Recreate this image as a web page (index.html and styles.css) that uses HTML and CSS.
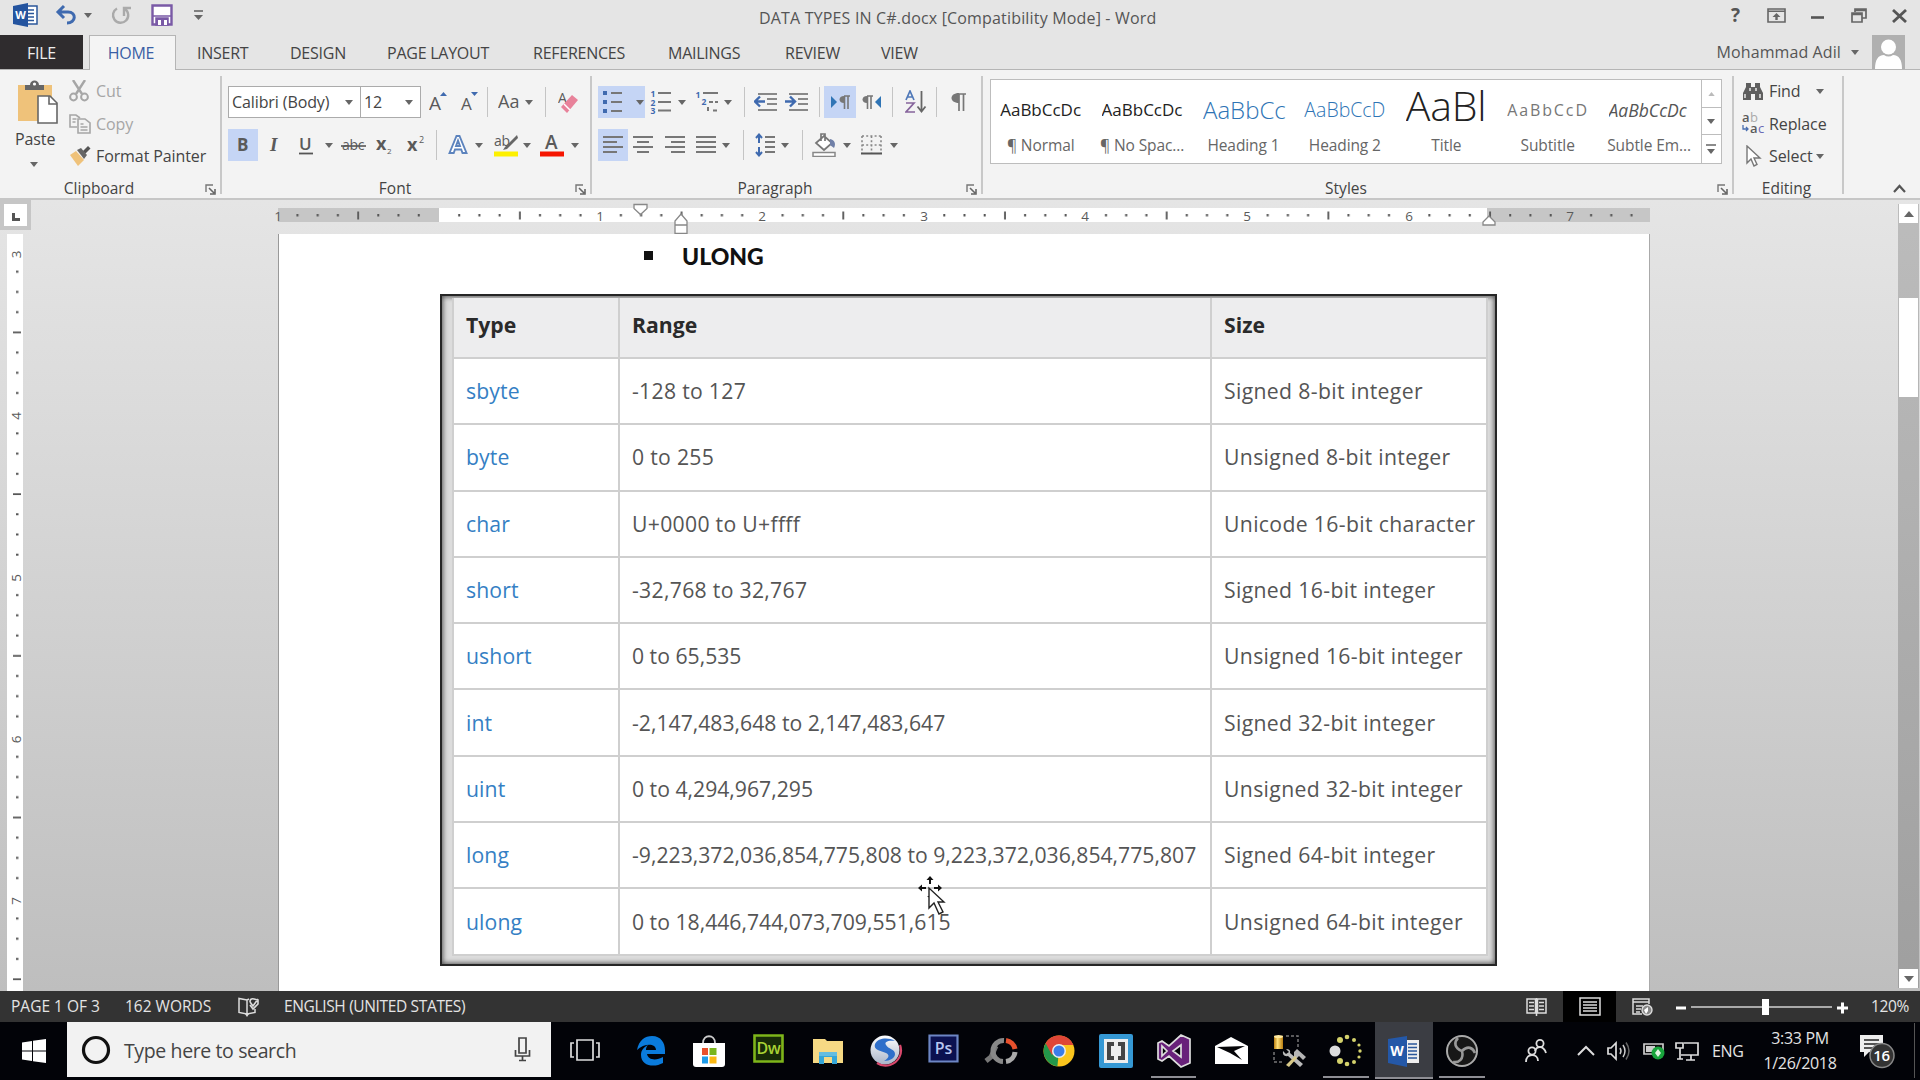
FILE: index.html
```html
<!DOCTYPE html>
<html lang="en">
<head>
<meta charset="utf-8">
<title>DATA TYPES IN C#.docx [Compatibility Mode] - Word</title>
<link rel="stylesheet" href="styles.css">
</head>
<body>
<svg class="defs" width="0" height="0">
  <defs>
    <symbol id="down" viewBox="0 0 8 5"><path d="M0 0h8L4 5z" fill="#666"/></symbol>
    <symbol id="launch" viewBox="0 0 11 11"><path d="M1 8V1h7" fill="none" stroke="#777" stroke-width="1.4"/><path d="M4 4l5 5M10 5v5H5" fill="none" stroke="#666" stroke-width="1.6"/></symbol>
    <pattern id="ticks" x="439" y="0" width="161.7" height="14" patternUnits="userSpaceOnUse">
      <path d="M19.2 6h2v2.5h-2zM39.4 6h2v2.5h-2zM59.6 6h2v2.5h-2zM80 3.5h1.8v8H80zM100 6h2v2.5h-2zM120.2 6h2v2.5h-2zM140.5 6h2v2.5h-2z" fill="#555"/>
    </pattern>
    <pattern id="vticks" x="0" y="20.5" width="16" height="161.7" patternUnits="userSpaceOnUse">
      <path d="M9 19.2v2h2.5v-2zM9 39.4v2h2.5v-2zM9 59.6v2h2.5v-2zM6 80v1.8h8V80zM9 100v2h2.5v-2zM9 120.2v2h2.5v-2zM9 140.5v2h2.5v-2z" fill="#555"/>
    </pattern>
    <linearGradient id="gold" x1="0" x2="1"><stop offset="0" stop-color="#b87d10"/><stop offset=".4" stop-color="#ffe07a"/><stop offset="1" stop-color="#b87d10"/></linearGradient>
    <linearGradient id="orb" x1="0" y1="0" x2="0" y2="1"><stop offset="0" stop-color="#fff"/><stop offset="1" stop-color="#a9b4c8"/></linearGradient>
  </defs>
</svg>

<header class="titlebar">
  <div class="quick">
    <svg width="25" height="24" viewBox="0 0 25 24"><path d="M12 3h12v18H12z" fill="#fff" stroke="#2b579a" stroke-width="1.5"/><path d="M15 7h6M15 10.5h6M15 14h6M15 17.5h6" stroke="#2b579a" stroke-width="1.4"/><path d="M0 3l15-3v24L0 21z" fill="#24549f"/><text x="7.5" y="16" class="glyph-w">W</text></svg>
    <svg width="22" height="22" viewBox="0 0 22 22"><path d="M9 2L3 8l6 6M3 8h10c9 0 8 11-1 11" fill="none" stroke="#3f6aaf" stroke-width="3"/></svg>
    <svg class="arr"><use href="#down"/></svg>
    <svg width="22" height="22" viewBox="0 0 22 22"><path d="M7 4.5a7.6 7.6 0 1 0 8 .5M14 12V4h7" fill="none" stroke="#aaa" stroke-width="2.4"/></svg>
    <svg width="22" height="22" viewBox="0 0 22 22"><path d="M1.500 1.500h19v19h-19z" fill="#fff" stroke="#7a5aa6" stroke-width="2.400"/><path d="M2 12h18M5 14h12v7H5z" fill="#7a5aa6" stroke="#7a5aa6" stroke-width="1.500"/><path d="M7 16h3v5H7zM13 16h3v5h-3z" fill="#fff"/></svg>
    <svg width="9" height="10" viewBox="0 0 9 10"><path d="M0 1h9" stroke="#666" stroke-width="1.600"/><path d="M0 5h9L4.500 10z" fill="#666"/></svg>
  </div>
  <h1 class="title">DATA TYPES IN C#.docx [Compatibility Mode] - Word</h1>
  <div class="window-buttons">
    <b class="help">?</b>
    <svg width="19" height="15" viewBox="0 0 19 15"><path d="M1 1h17v13H1zM1 3.200h17" fill="none" stroke="#666" stroke-width="1.600"/><path d="M9.500 5l4 4h-2.800v3H8.300V9H5.500z" fill="#666"/></svg>
    <svg width="13" height="15" viewBox="0 0 13 15"><path d="M0 9.500h13" stroke="#555" stroke-width="2.600"/></svg>
    <svg width="16" height="15" viewBox="0 0 16 15"><path d="M1 5h10v9H1zM1 6.500h10M4 4V1h11v9h-4M4 2.500h11" fill="none" stroke="#666" stroke-width="1.700"/></svg>
    <svg width="15" height="14" viewBox="0 0 15 14"><path d="M1 1l13 12M14 1L1 13" stroke="#555" stroke-width="2.800"/></svg>
  </div>
</header>

<nav class="tabs">
  <span class="tab file">FILE</span>
  <span class="tab home">HOME</span>
  <span class="tab t-insert">INSERT</span>
  <span class="tab t-design">DESIGN</span>
  <span class="tab t-layout">PAGE LAYOUT</span>
  <span class="tab t-ref">REFERENCES</span>
  <span class="tab t-mail">MAILINGS</span>
  <span class="tab t-review">REVIEW</span>
  <span class="tab t-view">VIEW</span>
  <div class="account"><span>Mohammad Adil</span><svg class="arr"><use href="#down"/></svg>
    <svg class="avatar" width="33" height="34" viewBox="0 0 33 34"><path d="M0 0h33v34H0z" fill="#b0b0b0"/><circle cx="16.500" cy="12" r="7.500" fill="#fff"/><path d="M3 34c0-9 3-14 9-14q4.500 3 9 0c6 0 9 5 9 14z" fill="#fff"/></svg>
  </div>
</nav>

<section class="ribbon">
  <div class="group clipboard">
    <div class="group-body">
      <div class="paste">
        <svg width="42" height="44" viewBox="0 0 42 44"><path d="M1 5h34v36H1z" fill="#efc27a"/><path d="M8 10V5h5C13-1 22-1 22 5h5v5z" fill="#666"/><circle cx="17.500" cy="4" r="1.600" fill="#fff"/><path d="M21 16h12l7 7v20H21z" fill="#fff" stroke="#666" stroke-width="1.600"/><path d="M32 16v8h8" fill="none" stroke="#666" stroke-width="1.600"/></svg>
        <span>Paste</span>
        <svg class="arr"><use href="#down"/></svg>
      </div>
      <div class="commands">
        <div class="cmd off"><svg width="20" height="22" viewBox="0 0 20 22"><path d="M4 0l9 14M16 0L7 14" stroke="#a6a6a6" stroke-width="2.400"/><circle cx="4.500" cy="17" r="3.400" fill="none" stroke="#a6a6a6" stroke-width="2"/><circle cx="15.500" cy="17" r="3.400" fill="none" stroke="#a6a6a6" stroke-width="2"/></svg><span>Cut</span></div>
        <div class="cmd off"><svg width="22" height="20" viewBox="0 0 22 20"><path d="M8 13H1V1h6l4 3M3.500 5h4M3.500 8h3" fill="none" stroke="#a6a6a6" stroke-width="1.600"/><path d="M9 5h7l5 4v10H9zM11.500 10h3M11.500 13h7M11.500 16h7" fill="#f2f2f2" stroke="#a6a6a6" stroke-width="1.600"/></svg><span>Copy</span></div>
        <div class="cmd"><svg width="22" height="20" viewBox="0 0 22 20"><path d="M1 9l6-4 8 9-6 6z" fill="#efc27a"/><path d="M8 4l4-2 6 7-3 4z" fill="#666"/><path d="M14 5l5-5 2.500 2.500-5 5z" fill="#555"/></svg><span>Format Painter</span></div>
      </div>
    </div>
    <div class="group-label">Clipboard</div>
    <svg class="launcher"><use href="#launch"/></svg>
  </div>

  <div class="group font">
    <div class="group-body stack">
      <div class="tools font-a">
        <div class="combo"><span>Calibri (Body)</span><svg class="arr"><use href="#down"/></svg></div>
        <div class="combo size"><span>12</span><svg class="arr"><use href="#down"/></svg></div>
        <svg width="20" height="24" viewBox="0 0 20 24"><text x="0" y="20" class="g g20">A</text><path d="M11 6l3.500-4L18 6z" fill="#3f6aaf"/></svg>
        <svg width="20" height="24" viewBox="0 0 20 24"><text x="1" y="20" class="g g17">A</text><path d="M11 2l3.500 4L18 2z" fill="#3f6aaf"/></svg>
        <i class="sep"></i>
        <svg width="26" height="24" viewBox="0 0 26 24"><text x="0" y="18" class="g g18">Aa</text></svg>
        <svg class="arr"><use href="#down"/></svg>
        <i class="sep"></i>
        <svg width="22" height="24" viewBox="0 0 22 24"><text x="0" y="13" class="g g15">A</text><path d="M3 17L14 5l6 5L9 23z" fill="#e8829a"/><path d="M6 14l6 6" stroke="#fff" stroke-width="1.500"/></svg>
      </div>
      <div class="tools font-b">
        <div class="hl"><svg width="16" height="24" viewBox="0 0 16 24"><text x="2" y="18" class="g g17 heavy">B</text></svg></div>
        <svg width="16" height="24" viewBox="0 0 16 24"><text x="3" y="18" class="g serif-i">I</text></svg>
        <svg width="16" height="26" viewBox="0 0 16 26"><text x="1" y="18" class="g g17 semi">U</text><path d="M1 21.500h14" stroke="#555" stroke-width="1.800"/></svg>
        <svg class="arr"><use href="#down"/></svg>
        <svg width="28" height="22" viewBox="0 0 28 22"><text x="1" y="16" class="g g14">abc</text><path d="M0 12h25" stroke="#555" stroke-width="1.600"/></svg>
        <svg width="20" height="26" viewBox="0 0 20 26"><text x="0" y="18" class="g g18 heavy">x</text><text x="11" y="22" class="g g8">2</text></svg>
        <svg width="20" height="26" viewBox="0 0 20 26"><text x="0" y="19" class="g g18 heavy">x</text><text x="12" y="11" class="g g9">2</text></svg>
        <i class="sep"></i>
        <svg width="22" height="24" viewBox="0 0 22 24"><path d="M2.500 20L9.500 3h3l7 17h-4l-1.300-3.500H8L6.700 20zM9 13h4l-2-5.500z" fill="#fff" stroke="#5c83bd" stroke-width="1.900"/></svg>
        <svg class="arr"><use href="#down"/></svg>
        <svg width="26" height="28" viewBox="0 0 26 28"><text x="1" y="15" class="g g14">ab</text><path d="M24 4L12 16l-2 3 4-1L25 7z" fill="#666"/><path d="M1 20.500h24v5H1z" fill="#fdf000"/></svg>
        <svg class="arr"><use href="#down"/></svg>
        <svg width="24" height="28" viewBox="0 0 24 28"><text x="5" y="18" class="g g20 semi">A</text><path d="M0 20.500h24v5H0z" fill="#f51500"/></svg>
        <svg class="arr"><use href="#down"/></svg>
      </div>
    </div>
    <div class="group-label">Font</div>
    <svg class="launcher"><use href="#launch"/></svg>
  </div>

  <div class="group para">
    <div class="group-body stack">
      <div class="tools para-a">
        <div class="hl split"><svg width="20" height="22" viewBox="0 0 20 22"><path d="M0 0h4v4H0zM0 9h4v4H0zM0 18h4v4H0z" fill="#3f6aaf"/><path d="M8 2h11M8 11h11M8 20h11" stroke="#777" stroke-width="2"/></svg><svg class="arr"><use href="#down"/></svg></div>
        <svg width="21" height="26" viewBox="0 0 21 26"><text x="3" y="8" class="g num">1</text><text x="3" y="16.500" class="g num">2</text><text x="3" y="25" class="g num">3</text><path d="M8 4h13M8 13h13M8 21.500h13" stroke="#777" stroke-width="2"/></svg>
        <svg class="arr"><use href="#down"/></svg>
        <svg width="24" height="26" viewBox="0 0 24 26"><text x="3" y="9" class="g num">1</text><text x="9" y="16" class="g num">2</text><path d="M8 4h15" stroke="#777" stroke-width="2"/><path d="M14 13h9M13 18v6M18 21.500h5" stroke="#777" stroke-width="2" stroke-dasharray="4 2"/></svg>
        <svg class="arr"><use href="#down"/></svg>
        <i class="sep"></i>
        <svg width="24" height="20" viewBox="0 0 24 20"><path d="M4 2h19M13 7h10M13 12h10M4 18h19" stroke="#888" stroke-width="2"/><path d="M1 9.500h10M6 4.500l-5 5 5 5" fill="none" stroke="#3f6aaf" stroke-width="2.400"/></svg>
        <svg width="24" height="20" viewBox="0 0 24 20"><path d="M4 2h19M13 7h10M13 12h10M4 18h19" stroke="#888" stroke-width="2"/><path d="M0 9.500h10M5 4.500l5 5-5 5" fill="none" stroke="#3f6aaf" stroke-width="2.400"/></svg>
        <i class="sep"></i>
        <div class="hl"><svg width="19" height="14" viewBox="0 0 19 14"><path d="M0 1l6 6-6 6z" fill="#2f74b5"/><path d="M13 1h6M13.500 1v13M17 1v13" stroke="#777" stroke-width="1.600"/><path d="M13 1v7c-6 0-6-7 0-7" fill="#777"/></svg></div>
        <svg width="19" height="14" viewBox="0 0 19 14"><path d="M19 1l-6 6 6 6z" fill="#2f74b5"/><path d="M5 1h6M5.500 1v13M9 1v13" stroke="#777" stroke-width="1.600"/><path d="M5 1v7c-6 0-6-7 0-7" fill="#777"/></svg>
        <i class="sep"></i>
        <svg width="22" height="24" viewBox="0 0 22 24"><path d="M1 10L5 1l4 9M2.500 7h5" fill="none" stroke="#4f78b8" stroke-width="1.700"/><path d="M1 13h8L1 22h9" fill="none" stroke="#86649c" stroke-width="1.700"/><path d="M16.500 1v20M12.500 16.500l4 5 4-5" fill="none" stroke="#666" stroke-width="1.800"/></svg>
        <i class="sep"></i>
        <svg width="15" height="18" viewBox="0 0 15 18"><path d="M6 1h9M8 1v17M12.500 1v17" stroke="#777" stroke-width="1.700"/><path d="M8 0v10C-2 10-2 0 8 0" fill="#777"/></svg>
      </div>
      <div class="tools para-b">
        <div class="hl"><svg width="20" height="18" viewBox="0 0 20 18"><path d="M0 1h20M0 6h14M0 11h20M0 16h14" stroke="#777" stroke-width="2"/></svg></div>
        <svg width="20" height="18" viewBox="0 0 20 18"><path d="M0 1h20M4 6h12M0 11h20M4 16h12" stroke="#777" stroke-width="2"/></svg>
        <svg width="20" height="18" viewBox="0 0 20 18"><path d="M0 1h20M6 6h14M0 11h20M6 16h14" stroke="#777" stroke-width="2"/></svg>
        <svg width="20" height="18" viewBox="0 0 20 18"><path d="M0 1h20M0 6h20M0 11h20M0 16h20" stroke="#777" stroke-width="2"/></svg>
        <svg class="arr"><use href="#down"/></svg>
        <i class="sep"></i>
        <svg width="20" height="24" viewBox="0 0 20 24"><path d="M4 2v8M1 5l3-3.500L7 5M4 14v8M1 19l3 3.500L7 19" fill="none" stroke="#3f6aaf" stroke-width="2"/><path d="M10 4h10M10 9h10M10 14h10M10 19h10" stroke="#777" stroke-width="1.800"/></svg>
        <svg class="arr"><use href="#down"/></svg>
        <i class="sep"></i>
        <svg width="24" height="24" viewBox="0 0 24 24"><path d="M4 10l8-7 8 7-8 7zM9 8V1h4v7" fill="#fff" stroke="#777" stroke-width="1.700"/><path d="M18 6c5 1 6 5 4 9l-4-3z" fill="#7080a8"/><path d="M1 19.500h22v4H1z" fill="#fff" stroke="#888" stroke-width="1.500"/></svg>
        <svg class="arr"><use href="#down"/></svg>
        <svg width="21" height="20" viewBox="0 0 21 20"><path d="M1 1h19M1 10h19M1 1v17M10.500 1v17M20 1v17" stroke="#888" stroke-width="1.600" stroke-dasharray="2 2.200"/><path d="M0 18.500h21" stroke="#555" stroke-width="2"/></svg>
        <svg class="arr"><use href="#down"/></svg>
      </div>
    </div>
    <div class="group-label">Paragraph</div>
    <svg class="launcher"><use href="#launch"/></svg>
  </div>

  <div class="group styles">
    <div class="gallery">
      <div class="style"><span class="sample">AaBbCcDc</span><span class="name">¶ Normal</span></div>
      <div class="style"><span class="sample">AaBbCcDc</span><span class="name">¶ No Spac...</span></div>
      <div class="style"><span class="sample h1s">AaBbCc</span><span class="name">Heading 1</span></div>
      <div class="style"><span class="sample h2s">AaBbCcD</span><span class="name">Heading 2</span></div>
      <div class="style"><span class="sample ttl">AaBl</span><span class="name">Title</span></div>
      <div class="style"><span class="sample sub">AaBbCcD</span><span class="name">Subtitle</span></div>
      <div class="style"><span class="sample em">AaBbCcDc</span><span class="name">Subtle Em...</span></div>
      <div class="gallery-scroll">
        <span><svg width="7" height="4" viewBox="0 0 8 5"><path d="M0 5h8L4 0z" fill="#bbb"/></svg></span>
        <span><svg class="arr"><use href="#down"/></svg></span>
        <span><svg width="10" height="10" viewBox="0 0 10 10"><path d="M0 1h10" stroke="#666" stroke-width="1.500"/><path d="M1 5h8L5 10z" fill="#666"/></svg></span>
      </div>
    </div>
    <div class="group-label">Styles</div>
    <svg class="launcher"><use href="#launch"/></svg>
  </div>

  <div class="group editing">
    <div class="group-body commands">
      <div class="cmd"><svg width="22" height="19" viewBox="0 0 22 19"><path d="M1 18v-7L4 5V1h5v4h4V1h5v4l3 6v7h-8v-6h-4v6z" fill="#5e5e5e"/><path d="M3 12v4M18 12v4M8 6v3M14 6v3" stroke="#fff" stroke-width="1.300"/></svg><span>Find</span><svg class="arr far"><use href="#down"/></svg></div>
      <div class="cmd"><svg width="25" height="24" viewBox="0 0 25 24"><text x="0" y="10" class="g g13 semi">a</text><text x="8" y="10" class="g g13 pale">b</text><text x="8" y="21" class="g g13 semi">a</text><text x="16" y="21" class="g g13 violet">c</text><path d="M1 13v4h5M4 15l2 2-2 2" fill="none" stroke="#4a6fb0" stroke-width="1.300"/></svg><span>Replace</span></div>
      <div class="cmd"><svg width="22" height="22" viewBox="0 0 22 22"><path d="M5 1v17l4-4 3 7 3-1.500-3-6.500h6z" fill="#fff" stroke="#777" stroke-width="1.400"/></svg><span>Select</span><svg class="arr near"><use href="#down"/></svg></div>
    </div>
    <div class="group-label">Editing</div>
  </div>
  <svg class="collapse" width="13" height="9" viewBox="0 0 13 9"><path d="M1 8l5.500-6L12 8" fill="none" stroke="#555" stroke-width="2.200"/></svg>
</section>

<main class="workspace">
  <div class="left-rail">
    <div class="tab-stop"><span></span></div>
    <svg class="vruler" width="16" height="757" viewBox="0 0 16 757">
      <path d="M0 0h16v757H0z" fill="#fff"/><path d="M0 21h16v740H0z" fill="url(#vticks)" transform="translate(0 -3)"/>
      <g class="g rule"><text transform="translate(14 20.500) rotate(-90)">3</text><text transform="translate(14 182) rotate(-90)">4</text><text transform="translate(14 344) rotate(-90)">5</text><text transform="translate(14 505.500) rotate(-90)">6</text><text transform="translate(14 667) rotate(-90)">7</text></g>
    </svg>
  </div>
  <div class="canvas">
    <svg class="hruler" width="1860" height="34" viewBox="31 200 1860 34">
      <path d="M278 208h161v14H278zM1487 208h163v14h-163z" fill="#c6c6c6"/><path d="M439 208h1048v14H439z" fill="#fff"/>
      <g transform="translate(0 208)"><path d="M282 0h1364v14H282z" fill="url(#ticks)"/></g>
      <g class="g rule"><text x="278" y="221">1</text><text x="600" y="221">1</text><text x="762" y="221">2</text><text x="924" y="221">3</text><text x="1085" y="221">4</text><text x="1247" y="221">5</text><text x="1409" y="221">6</text><text x="1570" y="221">7</text></g>
      <path d="M634 204.500h13v4l-6.500 6-6.500-6zM681 214l6 7v12.500h-12V221zM675 225h12M1489 216l6 6v3h-12v-3z" fill="#fff" stroke="#888" stroke-width="1.300"/>
    </svg>
    <article class="page">
      <p class="bullet"><i></i><b>ULONG</b></p>
      <div class="frame">
        <table>
          <thead><tr><th class="c1">Type</th><th class="c2">Range</th><th class="c3">Size</th></tr></thead>
          <tbody>
            <tr><td><a>sbyte</a></td><td class="wide">-128 to 127</td><td>Signed 8-bit integer</td></tr>
            <tr><td><a>byte</a></td><td class="wide">0 to 255</td><td>Unsigned 8-bit integer</td></tr>
            <tr><td><a>char</a></td><td class="wide">U+0000 to U+ffff</td><td>Unicode 16-bit character</td></tr>
            <tr><td><a>short</a></td><td class="wide">-32,768 to 32,767</td><td>Signed 16-bit integer</td></tr>
            <tr><td><a>ushort</a></td><td>0 to 65,535</td><td>Unsigned 16-bit integer</td></tr>
            <tr><td><a>int</a></td><td>-2,147,483,648 to 2,147,483,647</td><td>Signed 32-bit integer</td></tr>
            <tr><td><a>uint</a></td><td>0 to 4,294,967,295</td><td>Unsigned 32-bit integer</td></tr>
            <tr><td><a>long</a></td><td>-9,223,372,036,854,775,808 to 9,223,372,036,854,775,807</td><td>Signed 64-bit integer</td></tr>
            <tr><td><a>ulong</a></td><td>0 to 18,446,744,073,709,551,615</td><td>Unsigned 64-bit integer</td></tr>
          </tbody>
        </table>
      </div>
    </article>
  </div>
  <div class="scrollbar">
    <span class="sb-btn"><svg width="10" height="6" viewBox="0 0 10 6"><path d="M0 6h10L5 0z" fill="#666"/></svg></span>
    <span class="sb-thumb"></span>
    <span class="sb-btn"><svg width="10" height="6" viewBox="0 0 10 6"><path d="M0 0h10L5 6z" fill="#666"/></svg></span>
  </div>
</main>

<svg class="pointer" width="28" height="42" viewBox="0 0 28 42"><path d="M12 1l3.500 4H13v4h-2V5H8.500zM0 13l4-3.500V12h4v2H4v2.500zM24 13l-4-3.500V12h-4v2h4v2.500zM9 21h4v3z" fill="#111"/><path d="M11 13v20l5-5 5 11 4-2-5-10h6z" fill="#fff" stroke="#222" stroke-width="1.400"/></svg>

<footer class="status">
  <span class="s-page">PAGE 1 OF 3</span>
  <span class="s-words">162 WORDS</span>
  <svg class="s-proof" width="21" height="20" viewBox="0 0 21 20"><path d="M9 3L1 1.500v14L9 17l8-1.500V12M9 3v14M9 3l2-1" fill="none" stroke="#ddd" stroke-width="1.500"/><path d="M12 5l3 4 5-7M12 5q0-4 4-3l4 1v4l-5 5-3-4" fill="none" stroke="#ddd" stroke-width="1.600"/><path d="M7 17h4l-2 3z" fill="#ddd"/></svg>
  <span class="s-lang">ENGLISH (UNITED STATES)</span>
  <div class="views">
    <span class="view read"><svg width="21" height="18" viewBox="0 0 21 18"><path d="M1 1h8.500v14H1zM11.500 1H20v14h-8.500zM10.500 0v18M3 4.500h5M3 8h5M3 11.500h5M13 4.500h5M13 8h5M13 11.500h5" fill="none" stroke="#ddd" stroke-width="1.500"/></svg></span>
    <span class="view print"><svg width="22" height="19" viewBox="0 0 22 19"><path d="M1 1h20v17H1zM4 5h14M4 8h14M4 11h14M4 14h14" fill="none" stroke="#ddd" stroke-width="1.500"/></svg></span>
    <span class="view web"><svg width="21" height="18" viewBox="0 0 21 18"><path d="M17 6V1H1v15h9M1 4h16M4 8h7M4 11h5M4 14h4" fill="none" stroke="#ddd" stroke-width="1.500"/><circle cx="15" cy="12" r="5" fill="#888" stroke="#ddd" stroke-width="1.400"/><path d="M12 12l4-3v4l-2 3z" fill="#fff"/></svg></span>
  </div>
  <svg class="zoom" width="172" height="20" viewBox="0 0 172 20"><path d="M0 11h10M161 11h11M166.500 5.500v11" stroke="#fff" stroke-width="3"/><path d="M15 10h141" stroke="#aaa" stroke-width="2"/><path d="M86 2h7v16h-7z" fill="#fff"/></svg>
  <span class="s-pct">120%</span>
</footer>

<div class="taskbar">
  <div class="start"><svg width="24" height="24" viewBox="0 0 24 24"><path d="M0 3.500L10 2v9.500H0zM11 1.800L24 0v11.500H11zM0 12.500h10V22L0 20.500zM11 12.500h13V24l-13-1.800z" fill="#fff"/></svg></div>
  <div class="search">
    <svg width="30" height="30" viewBox="0 0 30 30"><circle cx="15" cy="15" r="12.500" fill="none" stroke="#111" stroke-width="3.200"/></svg>
    <span>Type here to search</span>
    <svg width="17" height="25" viewBox="0 0 17 25"><path d="M5 1h7v15H5zM1.500 13v6h14v-6M8.500 19v5M5 23.500h7" fill="none" stroke="#444" stroke-width="1.700"/></svg>
  </div>
  <div class="task-view"><svg width="30" height="24" viewBox="0 0 30 24"><path d="M7 2h16v20H7zM4 5H1v14h3M26 5h3v14h-3" fill="none" stroke="#ddd" stroke-width="1.700"/></svg></div>
  <div class="apps">
    <span class="app"><svg width="32" height="32" viewBox="0 0 32 32"><path d="M2 15C4 5 10 1 17 1c9 0 13 7 13 14v4H12c1 6 9 7 16 3v6c-9 5-22 3-22-8 0-5 3-8 7-10-2 2-2 4-2 5h10c0-7-12-7-19 0z" fill="#0a7bdc"/></svg></span>
    <span class="app"><svg width="34" height="34" viewBox="0 0 34 34"><path d="M11 9c0-9 12-9 12 0" fill="none" stroke="#ccc" stroke-width="1.800"/><path d="M1 9h32v21q0 3-3 3H4q-3 0-3-3z" fill="#fff"/><path d="M10 14h6v7h-6z" fill="#e8502c"/><path d="M17.500 14h7v7h-7z" fill="#7ab51d"/><path d="M10 22.500h6v7h-6z" fill="#1e9be9"/><path d="M17.500 22.500h7v7h-7z" fill="#fbb813"/></svg></span>
    <span class="app raised"><svg width="31" height="29" viewBox="0 0 31 29"><path d="M1.500 1.500h28v26h-28z" fill="#172b08" stroke="#7eb51a" stroke-width="2.600"/><text x="15.500" y="20" class="dw">Dw</text></svg></span>
    <span class="app"><svg width="32" height="28" viewBox="0 0 32 28"><path d="M1 2h12l2 2h16v22H1z" fill="#f6d984"/><path d="M7 27V15h18v12h-5v-7h-8v7z" fill="#35a6d8"/><path d="M7 15h18v4H7z" fill="#65bde0"/></svg></span>
    <span class="app"><svg width="34" height="34" viewBox="0 0 34 34"><circle cx="16" cy="16" r="14.500" fill="url(#orb)"/><path d="M6 10C9 4 19 3 26 7c-7-1-11 1-9 4 2 4 9 4 9 9 0 4-5 7-11 7 5-3 6-6 2-8C12 17 4 16 6 10z" fill="#2f6fca"/><path d="M31 11c3 8-1 17-10 20-5 1.500-10 0-13-2" fill="none" stroke="#d9486c" stroke-width="2.200"/></svg></span>
    <span class="app raised"><svg width="31" height="29" viewBox="0 0 31 29"><path d="M1.500 1.500h28v26h-28z" fill="#0b1150" stroke="#6d86c4" stroke-width="2.200"/><text x="15.500" y="20" class="ps">Ps</text></svg></span>
    <span class="app"><svg width="34" height="28" viewBox="0 0 34 28"><path d="M2 24l5-4 5-11" fill="none" stroke="#777" stroke-width="5"/><path d="M20 3.500A10 10 0 0 0 19 24.500" fill="none" stroke="#888" stroke-width="5"/><path d="M22 3.500A10.500 10.500 0 0 1 31 12" fill="none" stroke="#e8502c" stroke-width="5"/><path d="M31 15a10.500 10.500 0 0 1-9 9.500" fill="none" stroke="#aaa" stroke-width="5"/></svg></span>
    <span class="app"><svg width="32" height="32" viewBox="0 0 32 32"><circle cx="16" cy="16" r="15.500" fill="#fbc51d"/><path d="M16 16L2.600 8.300a15.500 15.500 0 0 0 11.800 23z" fill="#23974a"/><path d="M2.600 8.300a15.500 15.500 0 0 1 27.800 1.700H16L9 20z" fill="#df4637"/><circle cx="16" cy="16" r="7" fill="#eee"/><circle cx="16" cy="16" r="5.500" fill="#3b7de9"/></svg></span>
    <span class="app"><svg width="34" height="34" viewBox="0 0 34 34"><rect width="34" height="34" rx="2" fill="#3598d4"/><path d="M5 5h24v24H5z" fill="#eee"/><path d="M15 8v4h-3v10h3v4H8V8zM19 8v4h3v10h-3v4h7V8z" fill="#454545"/></svg></span>
    <span class="app open"><svg width="34" height="34" viewBox="0 0 34 34"><path d="M24 1l9 4v24l-9 4-12-11-7 5-4-2V9l4-2 7 5zM5 12v10l5-5zM24 11l-8 6 8 6z" fill="#68217a" fill-rule="evenodd" stroke="#ddd" stroke-width="1.700"/></svg></span>
    <span class="app"><svg width="35" height="27" viewBox="0 0 35 27"><path d="M1 9L17 0l17 9v18H1z" fill="#fff"/><path d="M3 10l28-1-11 5 8 9-12-7z" fill="#050508"/></svg></span>
    <span class="app"><svg width="34" height="34" viewBox="0 0 34 34"><path d="M14 2h12v12M2 18v10h10" fill="none" stroke="#777" stroke-width="1.500" stroke-dasharray="3 2"/><path d="M2 2h9v13H2z" fill="url(#gold)"/><ellipse cx="6.500" cy="2.500" rx="4.500" ry="1.500" fill="#ffe9a0"/><path d="M11 17q-1 6 5 5l12 11 3-3-13-11q1-4-4-4l3 3-3 2z" fill="#bbb"/><path d="M22 18l3-3 9 8-3 3-4-4-3 3-2-2z" fill="#b5b5b5"/><path d="M23 22l2 2-8 9-3-2z" fill="#d8c988"/></svg></span>
    <span class="app open"><svg width="34" height="34" viewBox="0 0 34 34"><g fill="#d4d26c"><circle cx="11" cy="6" r="3"/><circle cx="18" cy="3" r="2.300"/><circle cx="25" cy="6" r="2"/><circle cx="30" cy="11" r="1.600"/><circle cx="31" cy="17" r="1.700"/><circle cx="30" cy="23" r="1.600"/><circle cx="25" cy="28" r="2"/><circle cx="18" cy="30" r="2.300"/><circle cx="11" cy="27" r="3"/></g><circle cx="6" cy="17" r="5.500" fill="#ddd"/></svg></span>
    <span class="app active"><svg width="32" height="32" viewBox="0 0 32 32"><path d="M16 5h15v23H16z" fill="#eee"/><path d="M20 9h9M20 12.500h9M20 16h9M20 19.500h9M20 23h9" stroke="#2b579a" stroke-width="1.600"/><path d="M0 4l19-3v31L0 28z" fill="#2458a8"/><text x="9" y="21" class="word-w">W</text></svg></span>
    <span class="app open"><svg width="34" height="34" viewBox="0 0 34 34"><circle cx="17" cy="17" r="15" fill="#171717" stroke="#aaa" stroke-width="2"/><path d="M17 17C9 14 9 8 13 4M17 17c6-6 11-3 13 2M17 17c2 8-3 12-9 11" fill="none" stroke="#999" stroke-width="2.600"/></svg></span>
  </div>
  <div class="tray">
    <svg class="people" width="22" height="24" viewBox="0 0 22 24"><g fill="none" stroke="#ddd" stroke-width="1.800"><circle cx="7" cy="12" r="3.600"/><path d="M1 23c0-5 3-7 6-7s6 2 6 6"/><circle cx="15" cy="4.500" r="3.600"/><path d="M10 12c1-3 3-4 5-4s5 2 6 6"/></g></svg>
    <svg class="caret" width="18" height="11" viewBox="0 0 18 11"><path d="M1 10l8-8 8 8" fill="none" stroke="#ddd" stroke-width="2"/></svg>
    <svg class="sound" width="24" height="20" viewBox="0 0 24 20"><path d="M1 7h3l5-5v16l-5-5H1z" fill="none" stroke="#ddd" stroke-width="1.700"/><path d="M13 7q2 3 0 6M16 4q4 6 0 12" fill="none" stroke="#ccc" stroke-width="1.500"/><path d="M19 1.500q6 8.500 0 17" fill="none" stroke="#666" stroke-width="1.500"/></svg>
    <svg class="battery" width="22" height="20" viewBox="0 0 22 20"><path d="M1 3h19v10H1z" fill="#111" stroke="#ccc" stroke-width="1.700"/><path d="M3 5h9v6H3z" fill="#ccc"/><circle cx="15" cy="12" r="6.500" fill="#18a53c"/><path d="M15 8l3 4-3 4-3-4z" fill="#dff5e0"/></svg>
    <svg class="net" width="24" height="22" viewBox="0 0 24 22"><path d="M9 3h14v12H9M5 8v11M1 3h7v5H1zM16 15v5M11 20h9M2 19h6M9 15H6" fill="none" stroke="#ddd" stroke-width="1.700"/></svg>
    <span class="lang">ENG</span>
    <div class="clock"><span>3:33 PM</span><span class="date">1/26/2018</span></div>
    <svg class="notes" width="36" height="36" viewBox="0 0 36 36"><path d="M1 2h23v17H10l-5 5v-5H1z" fill="#eee"/><path d="M5 7h15M5 11h15M5 15h10" stroke="#222" stroke-width="1.500"/><circle cx="23" cy="22.500" r="12" fill="#333" stroke="#888" stroke-width="1.500"/><text x="22.500" y="28" class="badge">16</text></svg>
    <i class="edge"></i>
  </div>
</div>
</body>
</html>
```
FILE: styles.css
```css
* { box-sizing: border-box; }
body { margin: 0; width: 1920px; height: 1080px; overflow: hidden; display: flex; flex-direction: column; background: #e5e5e5; font-family: "Open Sans", "Noto Sans", sans-serif; font-size: 16px; line-height: 1; color: #444; }
svg { display: block; flex: none; }
.defs { position: absolute; }
.arr { width: 8px; height: 5px; }

/* Title bar */
.titlebar { height: 35px; flex: none; display: grid; grid-template-columns: 759px 1fr 230px; align-items: center; }
.quick { display: grid; grid-template-columns: 42px 29px 26px 41px 43px 20px; padding-left: 13px; align-items: center; margin-top: -5px; }
.title { margin: 0; font-size: 16px; font-weight: 400; letter-spacing: 0.17px; color: #555; white-space: nowrap; line-height: 24px; }
.window-buttons { display: grid; grid-template-columns: 36px 44px 40px 41px 16px; padding-left: 41px; align-items: center; margin-top: -4px; }
.help { font-size: 19px; color: #555; }

/* Tabs */
.tabs { height: 35px; flex: none; display: flex; border-bottom: 1px solid #b5b5b5; letter-spacing: -0.25px; }
.tab { height: 34px; line-height: 36px; white-space: nowrap; }
.file { width: 83px; background: #2f2c2e; color: #eee; text-align: center; margin-right: 6px; }
.home { width: 87px; height: 35px; background: #f4f4f4; border: 1px solid #b5b5b5; border-bottom: 0; color: #3a5fa5; text-align: center; line-height: 35px; margin-right: 21px; padding-right: 3px; }
.t-insert { width: 93px; }
.t-design { width: 97px; }
.t-layout { width: 146px; }
.t-ref { width: 135px; }
.t-mail { width: 117px; }
.t-review { width: 96px; }
.account { margin-left: auto; margin-right: 15px; display: flex; align-items: center; letter-spacing: 0.1px; color: #555; }
.account .arr { margin: 0 13px 0 10px; }
.avatar { align-self: flex-end; }

/* Ribbon */
.ribbon { height: 130px; flex: none; background: #f3f3f3; border-bottom: 2px solid #c6c6c6; display: flex; padding-top: 6px; }
.group { height: 118px; border-right: 2px solid #c8c8c8; display: grid; grid-template-rows: 100px 18px; position: relative; }
.clipboard { width: 222px; }
.font { width: 370px; }
.para { width: 391px; }
.styles { width: 751px; }
.editing { width: 110px; }
.group-label { text-align: center; line-height: 24px; letter-spacing: 0; font-size: 15.500px; color: #444; }
.clipboard .group-label { padding-right: 22px; }
.font .group-label { padding-right: 22px; }
.para .group-label { padding-right: 23px; }
.styles .group-label { padding-right: 23px; }
.editing .group-label { padding-right: 3px; }
.launcher { position: absolute; right: 4px; bottom: -1px; width: 11px; height: 11px; }
.group-body { display: flex; }
.stack { flex-direction: column; padding-top: 10px; gap: 11px; }
.paste { width: 69px; padding: 4px 0 0 15px; display: flex; flex-direction: column; }
.paste svg:first-child { margin-left: 2px; }
.paste span { margin: 7px 0 15px; letter-spacing: -0.1px; }
.paste .arr { margin-left: 15px; }
.commands { display: flex; flex-direction: column; }
.cmd { height: 32.500px; display: grid; grid-template-columns: 27px auto auto; justify-content: start; align-items: center; color: #444; letter-spacing: -0.1px; margin-top: -1px; margin-bottom: 1px; }
.clipboard .cmd { line-height: 30px; }
.off { color: #a6a6a6; }
.tools { height: 32px; display: grid; align-items: center; justify-items: start; }
.font-a { padding-left: 6px; grid-template-columns: 133px 68px 31px 27px 11px 27px 20px 13px 24px; }
.font-b { padding-left: 6px; grid-template-columns: 39px 31px 27px 16px 35px 31px 29px 11px 28px 18px 30px 17px 31px 8px; }
.combo { width: 133px; height: 32px; background: #fff; border: 1px solid #ababab; display: flex; align-items: center; justify-content: space-between; padding: 0 7px 0 3px; letter-spacing: -0.1px; line-height: 24px; white-space: nowrap; }
.combo.size { width: 60px; border-left: 0; }
.hl { width: 30px; height: 32px; background: #c5d5f5; display: grid; place-items: center; }
.hl.split { width: 47px; grid-template-columns: 33px 14px; justify-items: start; padding-left: 5px; }
.sep { width: 1px; height: 30px; background: #c4c4c4; }
.para-a { padding-left: 6px; grid-template-columns: 52px 28px 17px 29px 20px 10px 31px 34px 5px 38px 30px 13px 31px 15px 15px; }
.para-b { padding-left: 6px; grid-template-columns: 35px 32px 31px 26px 21px 12px 26px 21px 10px 31px 18px 29px 8px; }
.para-a .hl:not(.split) { width: 32px; }

/* Glyph lettering inside icons */
.g { fill: #5a5a5a; font-family: "Open Sans", sans-serif; }
.g20 { font-size: 19px; } .g18 { font-size: 18px; } .g17 { font-size: 17px; } .g15 { font-size: 14px; } .g14 { font-size: 14px; letter-spacing: -0.300px; } .g13 { font-size: 13px; } .g9 { font-size: 9px; } .g8 { font-size: 8px; }
.heavy { font-weight: 700; } .semi { font-weight: 600; }
.serif-i { font: italic 700 19px "Liberation Serif", serif; }
.num { font-size: 8.500px; font-weight: 700; fill: #3f6aaf; text-anchor: middle; }
.pale { fill: #aaa; } .violet { fill: #6a6ab5; }
.glyph-w { font: 700 11px "Open Sans", sans-serif; fill: #fff; text-anchor: middle; }
.word-w { font: 700 14px "Open Sans", sans-serif; fill: #fff; text-anchor: middle; }
.rule { font-size: 13.500px; text-anchor: middle; }

/* Styles gallery */
.gallery { margin: 3px 0 0 7px; width: 732px; height: 85px; background: #fff; border: 1px solid #bdbdbd; display: grid; grid-template-columns: repeat(7, 101.400px) 20px; }
.style { display: flex; flex-direction: column; align-items: center; overflow: hidden; }
.sample { width: 83px; height: 48px; line-height: 60px; overflow: hidden; white-space: nowrap; font-size: 17px; color: #222; }
.name { font-size: 15.500px; line-height: 22px; margin-top: 6px; letter-spacing: -0.1px; color: #666; white-space: nowrap; }
.style .name { margin-left: -2px; }
.h1s { font-size: 24px; font-weight: 300; color: #2e74b5; }
.h2s { font-size: 19.500px; font-weight: 300; color: #2e74b5; }
.ttl { font-size: 41px; font-weight: 300; line-height: 50px; height: 42px; margin: 0 0 6px; letter-spacing: -0.2px; }
.sub { letter-spacing: 1.900px; color: #777; font-size: 16px; }
.em { font-style: italic; color: #555; font-size: 17.500px; }
.gallery-scroll { width: 20px; border-left: 1px solid #bdbdbd; display: grid; grid-template-rows: 28px 27px 28px; }
.gallery-scroll span { display: grid; place-items: center; border-bottom: 1px solid #bdbdbd; }
.gallery-scroll span:last-child { border: 0; }
.editing .commands { padding-left: 8px; }
.editing .cmd { line-height: 30px; }
.far { margin-left: 15px; } .near { margin-left: 3px; }
.collapse { margin: 108px 0 0 49px; }

/* Document area */
.workspace { height: 791px; flex: none; display: flex; background: linear-gradient(#e5e5e5, #d2d2d2 50%, #bebebe); }
.left-rail { width: 31px; }
.tab-stop { width: 31px; height: 30px; border: 4px solid #c6c6c6; background: #fff; display: grid; place-items: center; margin-bottom: 4px; }
.tab-stop span { width: 8px; height: 8px; border: solid #555; border-width: 0 0 3px 3px; margin: 3px 0 0 1px; }
.vruler { margin-left: 7px; }
.canvas { width: 1867px; height: 791px; overflow: hidden; }
.page { width: 1372px; height: 757px; margin-left: 247px; background: #fff; border-left: 1px solid #999; border-right: 1px solid #aaa; }
.bullet { margin: 0; height: 60px; display: flex; align-items: flex-start; padding: 9px 0 0 365px; font: 700 23px/26px Lato, sans-serif; color: #111; letter-spacing: 0; }
.bullet i { width: 9px; height: 9px; background: #111; margin: 8px 29px 0 0; }
.frame { margin-left: 161px; width: 1057px; height: 672px; border: 2px solid #262626; background: #dcdcdc; padding: 2px 7px 8px 10px; box-shadow: inset 0 0 5px 1px #555; }
table { width: 1036px; border-collapse: collapse; table-layout: fixed; font-size: 21.200px; line-height: 26px; color: #555; }
th, td { height: 66.300px; border: 2px solid #cfcfcf; padding: 0 0 0 12px; text-align: left; background: #fff; white-space: nowrap; }
th { height: 60px; background: #ededee; color: #2a2a2a; border-top: 0; padding-bottom: 6px; }
.c1 { width: 166px; } .c2 { width: 592px; } .c3 { width: 276px; }
td:nth-child(3) { letter-spacing: 0.350px; }
.wide { letter-spacing: 0.300px; }
td a { color: #357fc4; letter-spacing: 0.100px; }
.scrollbar { width: 21px; height: 784px; margin-top: 4px; display: flex; flex-direction: column; align-items: center; background: linear-gradient(#bcbcbc, #9f9f9f); }
.sb-btn { width: 19px; height: 19px; background: #fff; display: grid; place-items: center; }
.sb-thumb { width: 19px; height: 99px; margin: 75px 0 auto; background: #fff; }
.pointer { position: absolute; left: 918px; top: 875px; }

/* Status bar */
.status { height: 31px; flex: none; background: #333; color: #e4e4e4; display: flex; align-items: center; font-size: 15.500px; letter-spacing: -0.35px; white-space: nowrap; }
.s-page { margin-left: 11px; width: 114px; letter-spacing: 0; } .s-words { width: 113px; letter-spacing: 0; } .s-proof { margin-right: 25px; } .s-lang { width: 225px; }
.views { margin-left: auto; display: flex; height: 31px; }
.view { width: 53px; display: grid; place-items: center; }
.print { background: #000; }
.zoom { margin: 0 23px 0 7px; }
.s-pct { width: 49px; }

/* Taskbar */
.taskbar { height: 58px; flex: none; background: #020308; display: flex; color: #e4e4e4; }
.start { width: 67px; padding: 17px 0 0 22px; }
.search { width: 484px; height: 55px; background: #f2f2f2; display: flex; align-items: center; padding: 0 20px 0 14px; font-size: 19.500px; letter-spacing: -0.38px; color: #444; line-height: 26px; }
.search span { margin: 2px auto 0 13px; }
.task-view { width: 71px; height: 56px; display: grid; place-items: center; padding-right: 3px; }
.apps { display: grid; grid-template-columns: 58px 58px 61px 57px 59px 57px 58px 57px 58px 57px 58px 57px 58px 58px 58px; height: 57px; }
.app { display: grid; place-items: center; position: relative; }
.raised { padding-bottom: 4px; }
.open::after { content: ""; position: absolute; left: 6px; right: 6px; bottom: 1px; height: 2px; background: #8e8e94; }
.active { background: #3b3d43; border-bottom: 2px solid #8e8e94; padding-top: 2px; }
.dw, .ps { font: 600 16px "Open Sans", sans-serif; fill: #a8d234; text-anchor: middle; letter-spacing: -0.500px; }
.ps { fill: #b7c6f0; letter-spacing: 0; }
.tray { flex: 1; display: flex; align-items: center; height: 57px; font-size: 16px; letter-spacing: -0.3px; }
.people { margin-left: 34px; } .caret { margin-left: 30px; } .sound { margin-left: 12px; } .battery { margin-left: 12px; } .net { margin-left: 10px; }
.lang { margin-left: 13px; width: 39px; }
.clock { width: 98px; text-align: center; line-height: 25px; } .clock span { display: block; }
.notes { margin-left: 10px; }
.badge { font: 600 15px "Open Sans", sans-serif; fill: #fff; text-anchor: middle; }
.edge { width: 1px; height: 55px; background: #555; margin-left: auto; margin-right: 5px; }
```
